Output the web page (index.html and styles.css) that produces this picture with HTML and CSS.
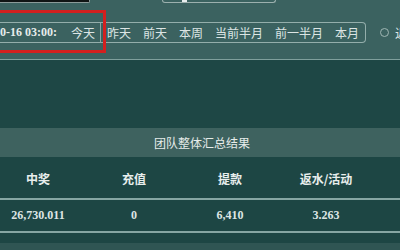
FILE: index.html
```html
<!DOCTYPE html>
<html>
<head>
<meta charset="utf-8">
<link rel="stylesheet" href="styles.css">
</head>
<body>
<div class="page">
  <div class="top">
    <div class="stubs">
      <div class="stub-black"></div>
      <div class="stub-box"><span class="stub-dot"></span></div>
    </div>
    <div class="toolbar">
      <div class="tabs">
        <span class="date">0-16 03:00:</span>
        <span class="tab first">今天</span>
        <span class="tab">昨天</span>
        <span class="tab">前天</span>
        <span class="tab">本周</span>
        <span class="tab">当前半月</span>
        <span class="tab">前一半月</span>
        <span class="tab">本月</span>
      </div>
      <div class="radio"><span class="circle"></span><span class="rtext">近7天</span></div>
    </div>
    <div class="redmark"></div>
  </div>
  <div class="spacer"></div>
  <div class="band">团队整体汇总结果</div>
  <div class="table">
    <div class="row head">
      <div class="cell">中奖</div>
      <div class="cell">充值</div>
      <div class="cell">提款</div>
      <div class="cell">返水/活动</div>
      <div class="cell">手续费</div>
    </div>
    <div class="row data">
      <div class="cell">26,730.011</div>
      <div class="cell">0</div>
      <div class="cell">6,410</div>
      <div class="cell">3.263</div>
      <div class="cell"></div>
    </div>
  </div>
  <div class="under"></div>
  <div class="foot"></div>
</div>
</body>
</html>
```

FILE: styles.css
```css
html, body {
  margin: 0;
  padding: 0;
  width: 400px;
  height: 250px;
  overflow: hidden;
  background: #1d4644;
}
.page {
  width: 400px;
  height: 250px;
  overflow: hidden;
  font-family: "Noto Sans CJK SC", "Noto Sans", sans-serif;
  color: #dfe7e6;
}
.top {
  position: relative;
  height: 59px;
  background: #3b6260;
  border-bottom: 1px solid #7f9f9c;
}
.stubs {
  display: flex;
  height: 3px;
}
.stub-black {
  width: 89px;
  height: 2px;
  background: #101514;
  border-bottom: 1px solid #8b9b99;
  border-right: 1px solid #8b9b99;
  border-bottom-right-radius: 2px;
}
.stub-box {
  position: relative;
  margin-left: 72px;
  width: 112px;
  height: 2px;
  border: 1px solid #9cb0ae;
  border-top: none;
  border-radius: 0 0 3px 3px;
}
.stub-dot {
  position: absolute;
  left: 19px;
  top: 0;
  width: 5px;
  height: 2px;
  background: #e8eeee;
}
.toolbar {
  display: flex;
  align-items: center;
  margin-top: 19px;
  width: max-content;
}
.tabs {
  display: flex;
  flex-shrink: 0;
  align-items: center;
  height: 19px;
  margin-left: -20px;
  border: 1px solid #94aeab;
  border-left: none;
  border-radius: 0 4px 4px 0;
}
.date {
  flex-shrink: 0;
  padding-left: 20px;
  width: 60px;
  font-family: "Liberation Serif", serif;
  font-weight: bold;
  font-size: 12px;
  white-space: nowrap;
  overflow: hidden;
  color: #e6eceb;
}
.tab {
  flex-shrink: 0;
  white-space: nowrap;
  font-size: 12px;
  line-height: 19px;
  padding: 0 6px;
  color: #dce5e4;
}
.tab.first {
  padding-left: 11px;
  padding-right: 5px;
  border-right: 1px solid #8aa6a3;
}
.radio {
  display: flex;
  flex-shrink: 0;
  align-items: center;
  margin-left: 14px;
}
.circle {
  width: 7px;
  height: 7px;
  border: 1.5px solid #9fb6b3;
  border-radius: 50%;
}
.rtext {
  margin-left: 6px;
  font-size: 12px;
  white-space: nowrap;
}
.redmark {
  position: absolute;
  left: -10px;
  top: 10px;
  width: 110px;
  height: 37px;
  border: 3px solid #d3201f;
}
.spacer {
  height: 68px;
  background: #1e4745;
}
.band {
  height: 29px;
  line-height: 29px;
  text-align: center;
  font-size: 12px;
  background: #3e625f;
  color: #e6ecea;
  padding-left: 4px;
}
.table {
  margin-left: -10px;
  width: 480px;
}
.row {
  display: grid;
  grid-template-columns: repeat(5, 96px);
}
.cell {
  text-align: center;
  white-space: nowrap;
}
.head {
  height: 41px;
  line-height: 44px;
  font-size: 12px;
  font-weight: bold;
  color: #e8eeed;
  border-bottom: 2px solid #86a6a3;
}
.data {
  height: 31px;
  line-height: 31px;
  font-family: "Liberation Serif", serif;
  font-weight: bold;
  font-size: 12px;
  color: #dde5e4;
  border-bottom: 2px solid #86a6a3;
}
.under {
  height: 10px;
  background: #1d4644;
}
.foot {
  height: 20px;
  background: #2f5553;
}
```
